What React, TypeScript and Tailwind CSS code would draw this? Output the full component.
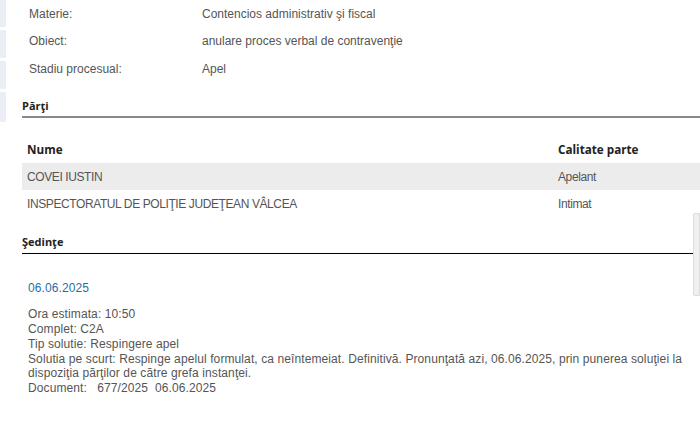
const info = [
  ['Materie:', 'Contencios administrativ şi fiscal'],
  ['Obiect:', 'anulare proces verbal de contravenţie'],
  ['Stadiu procesual:', 'Apel'],
];

const parti = [
  ['COVEI IUSTIN', 'Apelant'],
  ['INSPECTORATUL DE POLIŢIE JUDEŢEAN VÂLCEA', 'Intimat'],
];

export default function App() {
  return (
    <div
      className="relative w-[700px] h-[424px] overflow-hidden bg-white flex text-[12px] text-[#555]"
      style={{ fontFamily: '"Liberation Sans", Arial, sans-serif' }}
    >
      {/* left edge strip */}
      <div className="w-[6px] shrink-0 flex flex-col gap-[3px]">
        <div className="h-[27px] bg-[#eceef5]" />
        <div className="h-[28px] bg-[#eceef5]" />
        <div className="h-[28px] bg-[#eceef5]" />
        <div className="h-[30px] bg-[#eceef5]" />
      </div>

      <div className="flex-1 pl-[16px]">
        {info.map(([k, v]) => (
          <div key={k} className="flex h-[27.5px] items-center">
            <div className="w-[180px] pl-[7px]">{k}</div>
            <div>{v}</div>
          </div>
        ))}

        <div className="mt-[15px] font-bold text-[#222] text-[11px] pb-[2px] border-b-2 border-[#888]" style={{ fontFamily: '"Open Sans", sans-serif' }}>
          Părţi
        </div>

        <div className="mt-[19px]">
          <div className="flex h-[26px] items-center font-bold text-[#222] text-[11.7px]" style={{ fontFamily: '"Open Sans", sans-serif' }}>
            <div className="flex-1 pl-[5px]">Nume</div>
            <div className="w-[142px]">Calitate parte</div>
          </div>
          {parti.map(([n, c], i) => (
            <div key={n} className={`flex h-[27px] items-center tracking-[-0.4px] ${i === 0 ? 'bg-[#ececec]' : ''}`}>
              <div className="flex-1 pl-[5px]">{n}</div>
              <div className="w-[142px]">{c}</div>
            </div>
          ))}
        </div>

        <div className="mt-[17px] mr-[7px] font-bold text-[#222] text-[11px] pb-[2px] border-b border-black" style={{ fontFamily: '"Open Sans", sans-serif' }}>
          Şedinţe
        </div>

        <div className="pl-[6px] pt-[27px] leading-[14.8px] tracking-[0.1px]">
          <div className="text-[#1f6fa6]">06.06.2025</div>
          <div className="mt-[12px]">Ora estimata: 10:50</div>
          <div>Complet: C2A</div>
          <div>Tip solutie: Respingere apel</div>
          <div className="pr-[6px]">
            Solutia pe scurt: Respinge apelul formulat, ca neîntemeiat. Definitivă. Pronunţată azi, 06.06.2025, prin punerea soluţiei la dispoziţia părţilor de către grefa instanţei.
          </div>
          <div className="whitespace-pre">Document:   677/2025  06.06.2025</div>
        </div>
      </div>

      {/* scrollbar thumb */}
      <div className="absolute right-0 top-[213px] w-[7px] h-[83px] bg-[#f0f0f0] border border-[#dcdcdc] rounded-l-[2px]" />
    </div>
  );
}
